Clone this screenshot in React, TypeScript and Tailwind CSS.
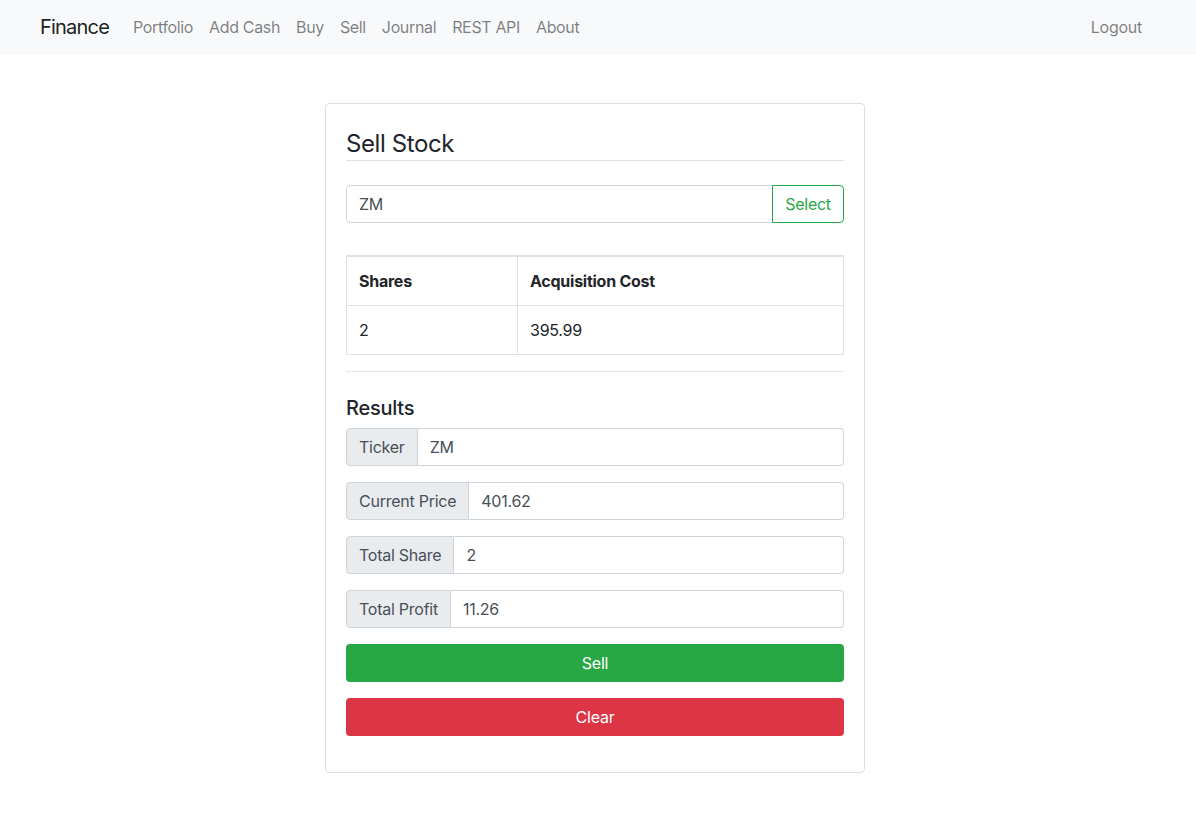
export default function App() {
  const links = ["Portfolio", "Add Cash", "Buy", "Sell", "Journal", "REST API", "About"];
  const results = [
    { label: "Ticker", value: "ZM" },
    { label: "Current Price", value: "401.62" },
    { label: "Total Share", value: "2" },
    { label: "Total Profit", value: "11.26" },
  ];

  return (
    <div className="min-h-screen bg-white text-[#212529] text-[16px] leading-[24px] tracking-[-0.25px] font-['Inter','Noto_Sans',sans-serif]">
      <nav className="flex items-center h-[55px] bg-[#f8f9fa] pl-[40px] pr-[46px] pb-[2px]">
        <a className="text-[20px] leading-[30px] tracking-[-0.8px] text-black/90 mr-[16px]">Finance</a>
        <ul className="flex tracking-[-0.35px]">
          {links.map((l) => (
            <li key={l}>
              <a className="block px-[8px] py-[8px] text-black/50">{l}</a>
            </li>
          ))}
        </ul>
        <a className="ml-auto block px-[8px] py-[8px] text-black/50">Logout</a>
      </nav>

      <div className="flex justify-center pt-[48px] pb-[48px]">
        <div className="w-[540px] mr-[6px] border border-black/[0.125] rounded-[4px] p-[20px]">
          <h4 className="text-[24px] leading-[29px] tracking-[-0.4px] pt-[5px] pb-[2px] border-b border-[#dee2e6] mb-[24px]">
            Sell Stock
          </h4>

          <div className="flex h-[38px] mb-[32px]">
            <input
              readOnly
              value="ZM"
              className="flex-1 min-w-0 border border-[#ced4da] rounded-l-[4px] px-[12px] text-[#495057] outline-none"
            />
            <button className="w-[72px] border border-[#28a745] text-[#28a745] rounded-r-[4px] -ml-px">
              Select
            </button>
          </div>

          <table className="w-full border-collapse border border-[#dee2e6] mb-[16px]">
            <thead>
              <tr>
                <th className="w-[171px] text-left font-bold p-[12px] border border-[#dee2e6] border-t-2">Shares</th>
                <th className="text-left font-bold p-[12px] border border-[#dee2e6] border-t-2">Acquisition Cost</th>
              </tr>
            </thead>
            <tbody>
              <tr>
                <td className="p-[12px] border border-[#dee2e6]">2</td>
                <td className="p-[12px] border border-[#dee2e6]">395.99</td>
              </tr>
            </tbody>
          </table>

          <hr className="border-0 border-t border-black/10 mb-[24px]" />

          <h5 className="text-[20px] leading-[24px] font-medium mb-[8px]">Results</h5>

          {results.map((r) => (
            <div key={r.label} className="flex h-[38px] mb-[16px]">
              <span className="flex items-center px-[12px] bg-[#e9ecef] border border-[#ced4da] rounded-l-[4px] text-[#495057]">
                {r.label}
              </span>
              <input
                readOnly
                value={r.value}
                className="flex-1 min-w-0 border border-[#ced4da] border-l-0 rounded-r-[4px] px-[12px] text-[#495057] outline-none"
              />
            </div>
          ))}

          <button className="block w-full h-[38px] bg-[#28a745] text-white rounded-[4px] mb-[16px]">Sell</button>
          <button className="block w-full h-[38px] bg-[#dc3545] text-white rounded-[4px] mb-[16px]">Clear</button>
        </div>
      </div>
    </div>
  );
}
